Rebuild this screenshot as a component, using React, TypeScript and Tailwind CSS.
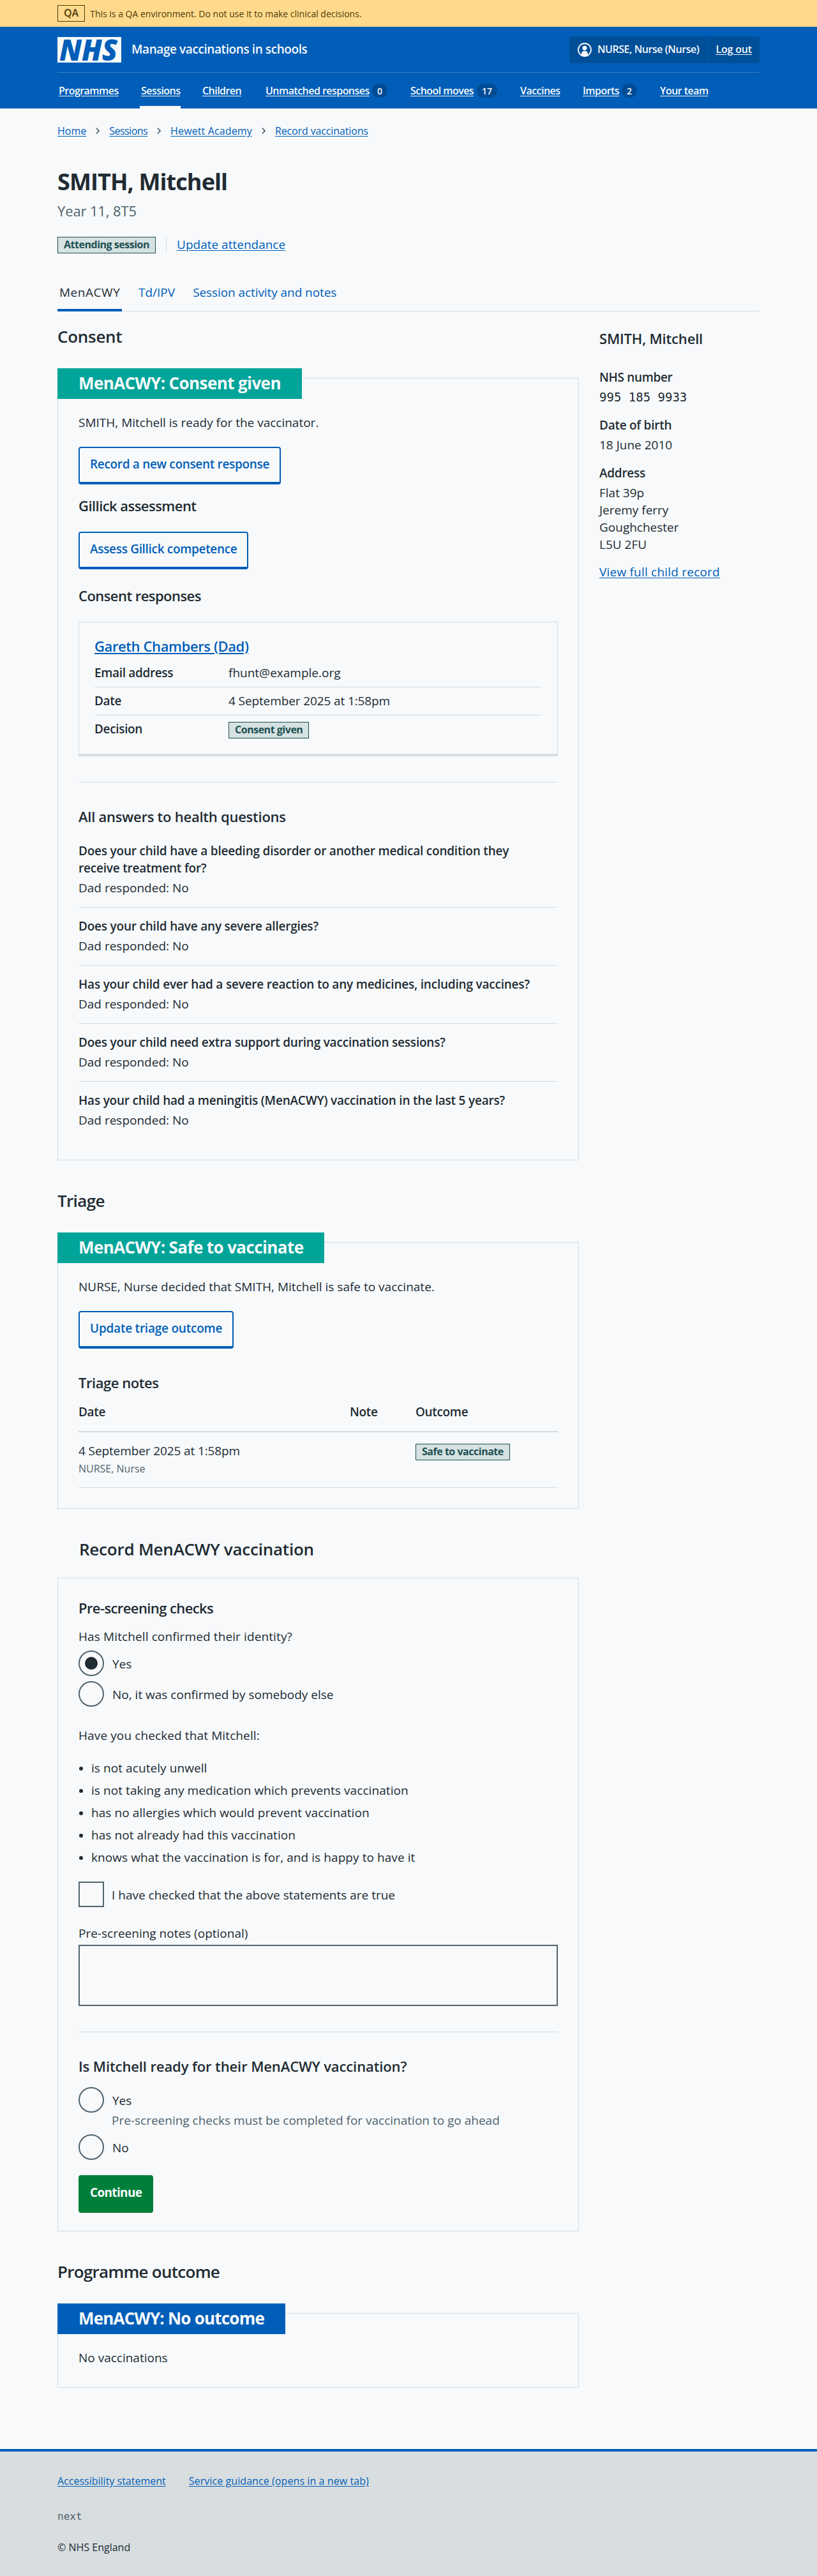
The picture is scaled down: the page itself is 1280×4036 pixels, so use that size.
import type { ReactNode } from "react";

const navItems = [
  { label: "Programmes", width: "w-[97px]" },
  { label: "Sessions", width: "w-[64px]", active: true },
  { label: "Children", width: "w-[67px]" },
  { label: "Unmatched responses", width: "w-[195px]", count: 0 },
  { label: "School moves", width: "w-[140px]", count: 17 },
  { label: "Vaccines", width: "w-[66px]" },
  { label: "Imports", width: "w-[89px]", count: 2 },
  { label: "Your team", width: "w-[82px]" },
];

const crumbs = [
  { label: "Home", spacing: "" },
  { label: "Sessions", spacing: "tracking-[-0.033em]" },
  { label: "Hewett Academy", spacing: "tracking-[0.008em]" },
  { label: "Record vaccinations", spacing: "tracking-[-0.008em]" },
];

const questions = [
  "Does your child have a bleeding disorder or another medical condition they receive treatment for?",
  "Does your child have any severe allergies?",
  "Has your child ever had a severe reaction to any medicines, including vaccines?",
  "Does your child need extra support during vaccination sessions?",
  "Has your child had a meningitis (MenACWY) vaccination in the last 5 years?",
];

const statements = [
  "is not acutely unwell",
  "is not taking any medication which prevents vaccination",
  "has no allergies which would prevent vaccination",
  "has not already had this vaccination",
  "knows what the vaccination is for, and is happy to have it",
];

function Link({ children, className = "underline-offset-2" }: { children: ReactNode; className?: string }) {
  return (
    <a href="#" className={`text-[#005eb8] underline ${className}`}>
      {children}
    </a>
  );
}

function SectionHeading({
  children,
  className = "",
  spacing = "tracking-[-0.011em]",
}: {
  children: ReactNode;
  className?: string;
  spacing?: string;
}) {
  return <h2 className={`text-[26px] leading-[35px] font-semibold ${spacing} ${className}`}>{children}</h2>;
}

function SmallHeading({
  children,
  className = "",
  spacing = "tracking-[-0.011em]",
}: {
  children: ReactNode;
  className?: string;
  spacing?: string;
}) {
  return <h3 className={`text-[22px] leading-[30px] font-semibold ${spacing} ${className}`}>{children}</h3>;
}

function Tag({ children }: { children: ReactNode }) {
  return (
    <strong className="inline-flex h-[26px] items-center border border-[#1d4f50] bg-[#d5e1e2] px-[9px] pb-[2px] text-[16px] leading-none font-bold tracking-[-0.03em] whitespace-nowrap text-[#1d4f50]">
      {children}
    </strong>
  );
}

function OutlineButton({
  children,
  className = "",
  spacing = "tracking-[-0.017em]",
}: {
  children: ReactNode;
  className?: string;
  spacing?: string;
}) {
  return (
    <button
      className={`flex h-[59px] w-fit items-center rounded-[4px] border-2 border-b-4 border-[#005eb8] px-4 pb-[2px] text-[19px] font-semibold whitespace-nowrap text-[#005eb8] ${spacing} ${className}`}
    >
      {children}
    </button>
  );
}

function Card({
  label,
  color = "",
  spacing = "tracking-[-0.023em]",
  className = "",
  children,
}: {
  label?: string;
  color?: string;
  spacing?: string;
  className?: string;
  children: ReactNode;
}) {
  return (
    <section className={`border border-[#d8dde0] px-8 ${className}`}>
      {label && (
        <h4
          className={`relative -mt-4 mb-6 -ml-[33px] flex h-12 w-fit items-center px-[33px] pb-[2px] text-[26px] font-bold whitespace-nowrap text-[#f8fafb] ${spacing} ${color}`}
        >
          {label}
        </h4>
      )}
      {children}
    </section>
  );
}

function Radio({ label, checked = false, className = "" }: { label: string; checked?: boolean; className?: string }) {
  return (
    <label className={`flex h-10 items-center ${className}`}>
      <span className="mr-[13px] flex size-10 items-center justify-center rounded-full border-2 border-[#50636e]">
        {checked && <span className="size-5 rounded-full bg-[#212b32]" />}
      </span>
      <span className="pt-[2px]">{label}</span>
    </label>
  );
}

function SummaryRow({ name, last = false, children }: { name: string; last?: boolean; children: ReactNode }) {
  return (
    <div className={`flex h-11 pt-2 ${last ? "" : "border-b border-[#d8dde0]"}`}>
      <dt className="w-[210px] font-semibold tracking-[-0.018em]">{name}</dt>
      <dd>{children}</dd>
    </div>
  );
}

function NhsLogo() {
  return (
    <svg viewBox="0 0 100 40" className="h-10 w-[100px] overflow-visible" role="img" aria-label="NHS">
      <rect width="100" height="40" fill="#f8fafb" />
      <text
        x="3"
        y="36.5"
        textLength="91"
        lengthAdjust="spacingAndGlyphs"
        fill="#005eb8"
        className="text-[46px] font-extrabold italic"
      >
        NHS
      </text>
    </svg>
  );
}

function UserIcon() {
  return (
    <svg viewBox="0 0 22 22" className="size-[22px]" aria-hidden="true">
      <circle cx="11" cy="11" r="10" fill="none" stroke="#f8fafb" strokeWidth="1.8" />
      <circle cx="11" cy="8.2" r="3.5" fill="#f8fafb" />
      <path d="M6 19.2v-1.6c0-3 2-4.9 5-4.9s5 1.9 5 4.9v1.6a9.5 9.5 0 0 1-10 0z" fill="#f8fafb" />
    </svg>
  );
}

function Chevron() {
  return (
    <svg viewBox="0 0 8 12" className="mx-[14px] h-3 w-2" aria-hidden="true">
      <path d="M1.8 1.5 6 6l-4.2 4.5" fill="none" stroke="#50636e" strokeWidth="1.8" />
    </svg>
  );
}

function Header() {
  return (
    <header className="h-32 bg-[#005eb8] px-[90px] text-[#f8fafb]">
      <div className="flex h-[71px] items-center justify-between">
        <div className="flex items-center gap-4 pt-px">
          <NhsLogo />
          <span className="pb-[2px] text-[19px] font-semibold tracking-[-0.022em]">Manage vaccinations in schools</span>
        </div>
        <div className="flex h-[42px] items-center rounded-[4px] bg-[#004f99] text-[16px] font-semibold">
          <div className="flex h-10 items-center gap-[9px] border-r border-[#005eb8] px-[13px]">
            <UserIcon />
            <span className="tracking-[-0.028em]">NURSE, Nurse (Nurse)</span>
          </div>
          <a href="#" className="px-[12px] tracking-[-0.01em] underline underline-offset-2">
            Log out
          </a>
        </div>
      </div>
      <nav className="flex h-[57px] gap-8 border-t border-[#337ec6] text-[16px] font-semibold tracking-[-0.034em]">
        {navItems.map((item) => (
          <div
            key={item.label}
            className={`flex items-center justify-between border-b-4 px-0.5 pt-1 whitespace-nowrap ${item.width} ${
              item.active ? "border-[#f8fafb]" : "border-transparent"
            }`}
          >
            <a href="#" className="underline underline-offset-2">
              {item.label}
            </a>
            {item.count !== undefined && (
              <span className="flex h-[22px] items-center rounded-full bg-[#004b93] px-2 text-[14px] tracking-normal">
                {item.count}
              </span>
            )}
          </div>
        ))}
      </nav>
    </header>
  );
}

function ConsentSection() {
  return (
    <>
      <SectionHeading>Consent</SectionHeading>
      <Card label="MenACWY: Consent given" color="bg-[#00a499]" className="mt-[47px] pb-12">
        <p>SMITH, Mitchell is ready for the vaccinator.</p>
        <OutlineButton className="mt-6">Record a new consent response</OutlineButton>
        <SmallHeading className="mt-[18px]" spacing="tracking-[-0.025em]">
          Gillick assessment
        </SmallHeading>
        <OutlineButton className="mt-[26px]">Assess Gillick competence</OutlineButton>
        <SmallHeading className="mt-[26px]" spacing="tracking-[-0.025em]">
          Consent responses
        </SmallHeading>
        <div className="mt-[26px] h-[211px] border border-b-4 border-[#d8dde0] px-6 pt-[22px]">
          <SmallHeading spacing="tracking-[-0.018em]">
            <Link className="decoration-2 underline-offset-2">Gareth Chambers (Dad)</Link>
          </SmallHeading>
          <dl className="mt-[6px]">
            <SummaryRow name="Email address">fhunt@example.org</SummaryRow>
            <SummaryRow name="Date">
              <span className="tracking-[-0.006em]">4 September 2025 at 1:58pm</span>
            </SummaryRow>
            <SummaryRow name="Decision" last>
              <span className="flex pt-[2px]">
                <Tag>Consent given</Tag>
              </span>
            </SummaryRow>
          </dl>
        </div>
        <hr className="mt-10 border-[#d8dde0]" />
        <SmallHeading className="mt-[38px] mb-[26px]">All answers to health questions</SmallHeading>
        {questions.map((q, i) => (
          <div key={q} className={i < questions.length - 1 ? "mb-4 border-b border-[#d8dde0] pb-4" : ""}>
            <p className="max-w-[718px] font-semibold tracking-[-0.011em]">{q}</p>
            <p className="mt-1">Dad responded: No</p>
          </div>
        ))}
      </Card>
    </>
  );
}

function TriageSection() {
  return (
    <>
      <SectionHeading className="mt-[46px]" spacing="tracking-[-0.025em]">
        Triage
      </SectionHeading>
      <Card label="MenACWY: Safe to vaccinate" color="bg-[#00a499]" className="mt-[47px] pb-8">
        <p>NURSE, Nurse decided that SMITH, Mitchell is safe to vaccinate.</p>
        <OutlineButton className="mt-6" spacing="tracking-[-0.012em]">
          Update triage outcome
        </OutlineButton>
        <SmallHeading className="mt-[38px]" spacing="tracking-[-0.02em]">
          Triage notes
        </SmallHeading>
        <div className="mt-[18px] grid grid-cols-[425px_103px_1fr] border-b-2 border-[#d8dde0] pb-4 font-semibold tracking-[-0.018em]">
          <span>Date</span>
          <span>Note</span>
          <span>Outcome</span>
        </div>
        <div className="grid grid-cols-[425px_103px_1fr] border-b border-[#d8dde0] pt-4 pb-[17px]">
          <div>
            <span className="tracking-[-0.006em]">4 September 2025 at 1:58pm</span>
            <div className="mt-[2px] text-[16px] leading-6 text-[#50636e]">NURSE, Nurse</div>
          </div>
          <span />
          <span className="flex items-start pt-[2px]">
            <Tag>Safe to vaccinate</Tag>
          </span>
        </div>
      </Card>
    </>
  );
}

function RecordSection() {
  return (
    <>
      <SectionHeading className="mt-[46px] pl-[34px]" spacing="tracking-[-0.009em]">
        Record MenACWY vaccination
      </SectionHeading>
      <Card className="mt-[27px] pt-[31px] pb-7">
        <SmallHeading spacing="tracking-[-0.027em]">Pre-screening checks</SmallHeading>
        <p className="mt-[17px] tracking-[0.006em]">Has Mitchell confirmed their identity?</p>
        <Radio label="Yes" checked className="mt-2" />
        <Radio label="No, it was confirmed by somebody else" className="mt-2" />
        <p className="mt-8 tracking-[0.006em]">Have you checked that Mitchell:</p>
        <ul className="mt-6 flex flex-col gap-2">
          {statements.map((s) => (
            <li key={s} className="flex items-center tracking-[0.004em]">
              <span className="mr-[13px] ml-px size-[6px] rounded-full bg-[#212b32]" />
              {s}
            </li>
          ))}
        </ul>
        <label className="mt-6 flex h-10 items-center">
          <span className="mr-3 size-10 border-2 border-[#50636e]" />
          <span className="pt-[2px]">I have checked that the above statements are true</span>
        </label>
        <p className="mt-7">Pre-screening notes (optional)</p>
        <textarea className="mt-1 block h-24 w-full resize-none border-2 border-[#50636e]" />
        <hr className="mt-10 border-[#d8dde0]" />
        <SmallHeading className="mt-[38px]" spacing="tracking-[-0.005em]">
          Is Mitchell ready for their MenACWY vaccination?
        </SmallHeading>
        <Radio label="Yes" className="mt-[18px]" />
        <p className="-mt-px pl-[52px] text-[#50636e]">Pre-screening checks must be completed for vaccination to go ahead</p>
        <Radio label="No" className="mt-2" />
        <button className="mt-6 flex h-[59px] items-center rounded-[4px] bg-[#007f3b] px-[18px] pb-1 text-[19px] font-bold tracking-[-0.035em] text-[#f8fafb]">
          Continue
        </button>
      </Card>
    </>
  );
}

function Sidebar() {
  return (
    <aside className="w-[251px] pt-[5px]">
      <SmallHeading spacing="tracking-[-0.008em]">SMITH, Mitchell</SmallHeading>
      <dl className="mt-[33px]">
        <dt className="font-semibold tracking-[-0.018em]">NHS number</dt>
        <dd className="mt-1 font-[DejaVu_Sans_Mono,monospace]">995 185 9933</dd>
        <dt className="mt-[17px] font-semibold tracking-[-0.014em]">Date of birth</dt>
        <dd className="mt-1">18 June 2010</dd>
        <dt className="mt-[17px] font-semibold tracking-[-0.014em]">Address</dt>
        <dd className="mt-1">
          Flat 39p
          <br />
          Jeremy ferry
          <br />
          Goughchester
          <br />
          L5U 2FU
        </dd>
      </dl>
      <p className="mt-4 tracking-[0.011em]">
        <Link>View full child record</Link>
      </p>
    </aside>
  );
}

export default function App() {
  return (
    <div className="flex min-h-[4036px] flex-col bg-[#f7f9fb] font-['Open_Sans',sans-serif] text-[19px] leading-[27px] text-[#212b32]">
      <div className="flex h-[42px] items-center gap-2 bg-[#ffda8c] px-[90px] text-[14px] text-[#4d3b0b]">
        <strong className="flex h-[26px] items-center border border-[#4d3b0b] px-[9px] pb-[2px] text-[16px] leading-none font-semibold">
          QA
        </strong>
        <span>This is a QA environment. Do not use it to make clinical decisions.</span>
      </div>
      <Header />
      <main className="px-[90px]">
        <nav className="mt-[23px] flex items-center text-[16px] leading-6">
          {crumbs.map((crumb, i) => (
            <span key={crumb.label} className={`flex items-center ${crumb.spacing}`}>
              {i > 0 && <Chevron />}
              <Link>{crumb.label}</Link>
            </span>
          ))}
        </nav>
        <h1 className="mt-[46px] text-[36px] leading-[44px] font-bold tracking-[-0.025em]">SMITH, Mitchell</h1>
        <p className="mt-2 text-[22px] leading-[30px] tracking-[-0.006em] text-[#50636e]">Year 11, 8T5</p>
        <div className="mt-[25px] flex h-[27px] items-end">
          <Tag>Attending session</Tag>
          <span className="mx-4 h-[27px] w-px bg-[#d8dde0]" />
          <Link>Update attendance</Link>
        </div>
        <div className="mt-[47px] flex h-11 border-b border-[#d8dde0]">
          <span className="mr-6 h-11 w-[101px] border-b-4 border-[#005eb8] px-[3px] pt-px tracking-[0.028em]">MenACWY</span>
          <a href="#" className="mr-6 px-0.5 pt-px text-[#005eb8]">
            Td/IPV
          </a>
          <a href="#" className="px-0.5 pt-px tracking-[-0.004em] text-[#005eb8]">
            Session activity and notes
          </a>
        </div>
        <div className="mt-[22px] flex justify-between">
          <div className="w-[817px]">
            <ConsentSection />
            <TriageSection />
            <RecordSection />
            <SectionHeading className="mt-[46px]" spacing="tracking-[-0.028em]">
              Programme outcome
            </SectionHeading>
            <Card
              label="MenACWY: No outcome"
              color="bg-[#005eb8]"
              spacing="tracking-[-0.03em]"
              className="mt-[47px] pb-8"
            >
              <p>No vaccinations</p>
            </Card>
          </div>
          <Sidebar />
        </div>
      </main>
      <footer className="mt-24 grow border-t-4 border-[#005eb8] bg-[#d8dde0] px-[90px] pt-[34px] text-[16px] leading-6">
        <div className="flex gap-9">
          <Link>Accessibility statement</Link>
          <Link className="tracking-[0.005em] underline-offset-2">Service guidance (opens in a new tab)</Link>
        </div>
        <p className="mt-8 font-[DejaVu_Sans_Mono,monospace] text-[#50636e]">next</p>
        <p className="mt-6">© NHS England</p>
      </footer>
    </div>
  );
}
